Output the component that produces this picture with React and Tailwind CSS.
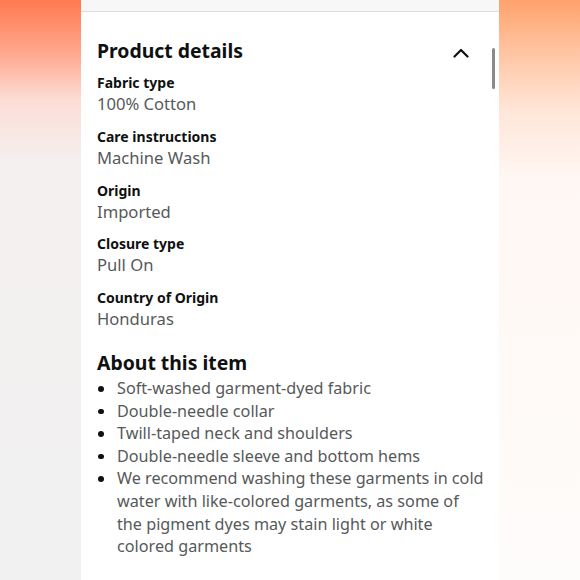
import React from 'react';

const details = [
  { label: 'Fabric type', value: '100% Cotton' },
  { label: 'Care instructions', value: 'Machine Wash' },
  { label: 'Origin', value: 'Imported' },
  { label: 'Closure type', value: 'Pull On' },
  { label: 'Country of Origin', value: 'Honduras' },
];

const bullets = [
  'Soft-washed garment-dyed fabric',
  'Double-needle collar',
  'Twill-taped neck and shoulders',
  'Double-needle sleeve and bottom hems',
  'We recommend washing these garments in cold water with like-colored garments, as some of the pigment dyes may stain light or white colored garments',
];

const App = () => {
  return (
    <div className="w-[580px] h-[580px] flex overflow-hidden font-['Noto_Sans',sans-serif]">
      <div className="w-[81px] shrink-0 bg-[linear-gradient(to_bottom,#ff7a50_0px,#ffa48a_50px,#fcddd5_100px,#f4f0ef_160px,#f1f1f1_580px)]" />

      <div className="w-[418px] shrink-0 bg-white flex flex-col relative">
        <div className="h-[12px] bg-[#f7f7f7] border-b border-[#dcdcdc]" />

        <div className="px-[16px] pt-[25px]">
          <div className="flex items-center justify-between">
            <h2 className="text-[19.4px] font-bold text-[#0f1111] leading-[28px]">Product details</h2>
            <svg width="16" height="10" viewBox="0 0 16 10" className="mr-[14px] mt-[4px]">
              <path d="M1.5 8.5 L8 2 L14.5 8.5" fill="none" stroke="#0f1111" strokeWidth="2.2" strokeLinecap="round" strokeLinejoin="round" />
            </svg>
          </div>

          <div className="mt-[7px] flex flex-col gap-[10.75px]">
            {details.map((d) => (
              <div key={d.label} className="flex flex-col">
                <span className="text-[14px] font-bold text-[#0f1111] leading-[21px]">{d.label}</span>
                <span className="text-[16.6px] text-[#565959] leading-[22px]">{d.value}</span>
              </div>
            ))}
          </div>

          <h2 className="mt-[19px] text-[19.4px] font-bold text-[#0f1111] leading-[28px]">About this item</h2>

          <ul className="mt-[0px] flex flex-col">
            {bullets.map((b) => (
              <li key={b} className="flex text-[16.2px] text-[#565959] leading-[22.6px]">
                <span className="w-[20px] shrink-0 flex pt-[9px] pl-[1px]">
                  <span className="w-[5.5px] h-[5.5px] rounded-full bg-[#0f1111]" />
                </span>
                <span className="-mr-[4px]">{b}</span>
              </li>
            ))}
          </ul>
        </div>

        <div className="absolute left-[411px] top-[48px] w-[3px] h-[41px] rounded-full bg-[#8a8a8a]" />
      </div>

      <div className="flex-1 bg-[linear-gradient(to_bottom,#ffa26c_0px,#ffc3a0_50px,#ffe6d8_110px,#fff7f3_180px,#fefcfb_580px)]" />
    </div>
  );
};

export default App;
